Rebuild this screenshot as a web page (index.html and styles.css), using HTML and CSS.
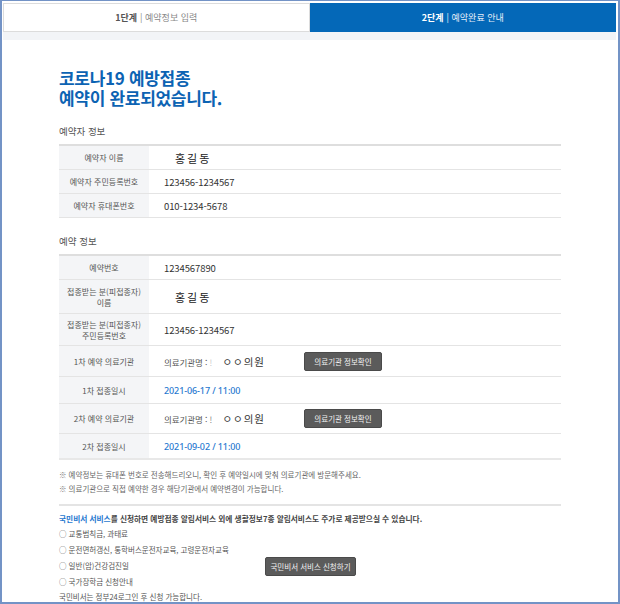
FILE: index.html
```html
<!DOCTYPE html>
<html lang="ko">
<head>
<meta charset="utf-8">
<meta name="viewport" content="width=device-width,initial-scale=1.0"/>
<title>코로나19 예방접종 예약완료</title>
<link rel="stylesheet" href="styles.css">
</head>

<body>
<div class="frame">
	<div class="head">
		<div class="steps">
			<div class="step"><b>1단계</b> | 예약정보 입력</div>
			<div class="step step-on"><b>2단계</b> | 예약완료 안내</div>
		</div>
	</div>
	<div class="panel">
		<h1 class="done-tit"><span>코로나19 예방접종</span><span>예약이 완료되었습니다.</span></h1>

		<h2 class="sec-tit">예약자 정보</h2>
		<div class="tbl">
			<div class="tr">
				<div class="th">예약자 이름</div>
				<div class="td"><span class="name">홍길동</span></div>
			</div>
			<div class="tr">
				<div class="th">예약자 주민등록번호</div>
				<div class="td">123456-1234567</div>
			</div>
			<div class="tr">
				<div class="th">예약자 휴대폰번호</div>
				<div class="td">010-1234-5678</div>
			</div>
		</div>

		<h2 class="sec-tit">예약 정보</h2>
		<div class="tbl">
			<div class="tr">
				<div class="th">예약번호</div>
				<div class="td">1234567890</div>
			</div>
			<div class="tr tr-2line">
				<div class="th">접종받는 분(피접종자)<br>이름</div>
				<div class="td"><span class="name">홍길동</span></div>
			</div>
			<div class="tr tr-2line tr-2line-b">
				<div class="th">접종받는 분(피접종자)<br>주민등록번호</div>
				<div class="td">123456-1234567</div>
			</div>
			<div class="tr tr-org">
				<div class="th">1차 예약 의료기관</div>
				<div class="td">
					<span class="org">의료기관명 : <i class="mark mark-lt">!</i> <span class="org-nm">ㅇㅇ의원</span></span>
					<button type="button" class="btn-sm">의료기관 정보확인</button>
				</div>
			</div>
			<div class="tr tr-date">
				<div class="th">1차 접종일시</div>
				<div class="td"><span class="date">2021-06-17 / 11:00</span></div>
			</div>
			<div class="tr tr-org tr-org-b">
				<div class="th">2차 예약 의료기관</div>
				<div class="td">
					<span class="org">의료기관명 : <i class="mark">!</i> <span class="org-nm">ㅇㅇ의원</span></span>
					<button type="button" class="btn-sm">의료기관 정보확인</button>
				</div>
			</div>
			<div class="tr tr-date tr-date-b">
				<div class="th">2차 접종일시</div>
				<div class="td"><span class="date">2021-09-02 / 11:00</span></div>
			</div>
		</div>

		<div class="notes">
			<p><span class="ref">※</span> 예약정보는 휴대폰 번호로 전송해드리오니, 확인 후 예약일시에 맞춰 의료기관에 방문해주세요.</p>
			<p><span class="ref">※</span> 의료기관으로 직접 예약한 경우 해당기관에서 예약변경이 가능합니다.</p>
		</div>

		<div class="promo">
			<p class="promo-txt"><em>국민비서 서비스</em>를 신청하면 예방접종 알림서비스 외에 생활정보7종 알림서비스도 주가로 제공받으실 수 있습니다.</p>
			<div class="promo-body">
				<ul class="svc-list">
					<li>○ 교통범칙금, 과태료</li>
					<li>○ 운전면허갱신, 통학버스운전자교육, 고령운전자교육</li>
					<li>○ 일반(암)건강검진일</li>
					<li>○ 국가장학금 신청안내</li>
				</ul>
				<button type="button" class="btn-svc">국민비서 서비스 신청하기</button>
			</div>
			<p class="promo-foot">국민비서는 정부24로그인 후 신청 가능합니다.</p>
		</div>
	</div>
</div>
</body>

</html>
```

FILE: styles.css
```css
*,*:before,*:after{
	padding: 0;
	margin: 0;
	box-sizing: border-box;
}
body{
	font-family: "Noto Sans CJK KR", "Liberation Sans", sans-serif;
	color: #333;
	background: #fff;
}
ul{
	list-style: none;
}
button{
	font-family: inherit;
	cursor: pointer;
}
.frame{
	width: 620px;
	height: 604px;
	overflow: hidden;
	padding: 2px 2px 0 1px;
	border: 2px solid #7393c6;
	border-top-width: 1px;
	background: #fff;
}
/* 단계 탭 */
.head{
	padding-bottom: 8px;
	background: #f2f4f7;
}
.steps{
	display: flex;
	height: 29px;
}
.step{
	flex: 1;
	display: flex;
	align-items: center;
	justify-content: center;
	font-size: 9px;
	color: #888;
	background: #fff;
	border: 1px solid #dcdcdc;
}
.step b{
	margin-right: 3px;
	color: #555;
}
.step.step-on{
	color: #e6eef8;
	background: #0468b8;
	border-color: #0468b8;
}
.step.step-on b{
	color: #fff;
}
.panel{
	height: 100%;
	padding: 28px 55px 0 56px;
	background: #fff;
}
.done-tit{
	font-size: 17px;
	font-weight: 700;
	color: #0c63b3;
	letter-spacing: -0.3px;
}
.done-tit span{
	display: block;
	height: 20px;
	line-height: 20px;
}
.sec-tit{
	margin-top: 16px;
	margin-bottom: 6px;
	font-size: 9.5px;
	line-height: 14px;
	font-weight: 400;
	color: #555;
}
/* 정보 테이블 */
.tbl{
	border-top: 2px solid #dedede;
}
.tr{
	display: grid;
	grid-template-columns: 90px 1fr;
	height: 24px;
	border-bottom: 1px solid #e4e4e4;
}
.tr-2line{
	height: 34px;
}
.tr-2line-b{
	height: 32px;
}
.tr-org{
	height: 31px;
}
.tr-org-b{
	height: 30px;
}
.tr-date{
	height: 27px;
}
.tr-date-b{
	height: 26px;
	border-bottom-width: 2px;
	border-bottom-color: #e8e8e8;
}
.th{
	display: flex;
	align-items: center;
	justify-content: center;
	text-align: center;
	font-size: 8px;
	line-height: 11px;
	color: #555;
	background: #f4f5f7;
}
.td{
	display: flex;
	align-items: center;
	padding-left: 15px;
	font-size: 9.5px;
	color: #333;
	letter-spacing: -0.1px;
}
.name{
	padding-left: 11px;
	font-size: 11px;
	letter-spacing: 2px;
	color: #222;
}
.org{
	width: 140px;
	font-size: 8.5px;
	color: #555;
}
.mark{
	font-style: normal;
	color: #888;
}
.mark-lt{
	color: #ccc;
}
.org-nm{
	margin-left: 8px;
	font-size: 10.5px;
	letter-spacing: 1px;
	color: #333;
}
.btn-sm{
	width: 78px;
	height: 19px;
	font-size: 7.5px;
	color: #f2f2f2;
	background: #5b5b5b;
	border: 1px solid #4a4a4a;
	border-radius: 2px;
}
.date{
	font-family: "Noto Sans", "Noto Sans CJK KR", sans-serif;
	font-size: 9px;
	font-weight: 500;
	color: #1f78cf;
}
/* 안내 */
.notes{
	margin-top: 8px;
	padding-bottom: 8px;
	border-bottom: 2px solid #e4e4e4;
}
.notes p{
	font-size: 7.5px;
	line-height: 14px;
	color: #666;
}
.notes .ref{
	font-family: "Noto Sans CJK KR", sans-serif;
	font-variant-emoji: text;
	color: #777;
}
.promo{
	padding-top: 6px;
}
.promo-txt{
	font-size: 7.7px;
	line-height: 14px;
	font-weight: 700;
	color: #444;
}
.promo-txt em{
	font-style: normal;
	color: #1f78cf;
}
.promo-body{
	display: flex;
	align-items: flex-end;
}
.svc-list{
	width: 206px;
}
.svc-list li{
	font-size: 7.5px;
	line-height: 16px;
	color: #555;
}
.btn-svc{
	width: 91px;
	height: 19px;
	margin-bottom: 14px;
	font-size: 7.5px;
	color: #f2f2f2;
	background: #5b5b5b;
	border: 1px solid #4a4a4a;
	border-radius: 2px;
}
.promo-foot{
	font-size: 7.5px;
	line-height: 14px;
	color: #555;
}
```
